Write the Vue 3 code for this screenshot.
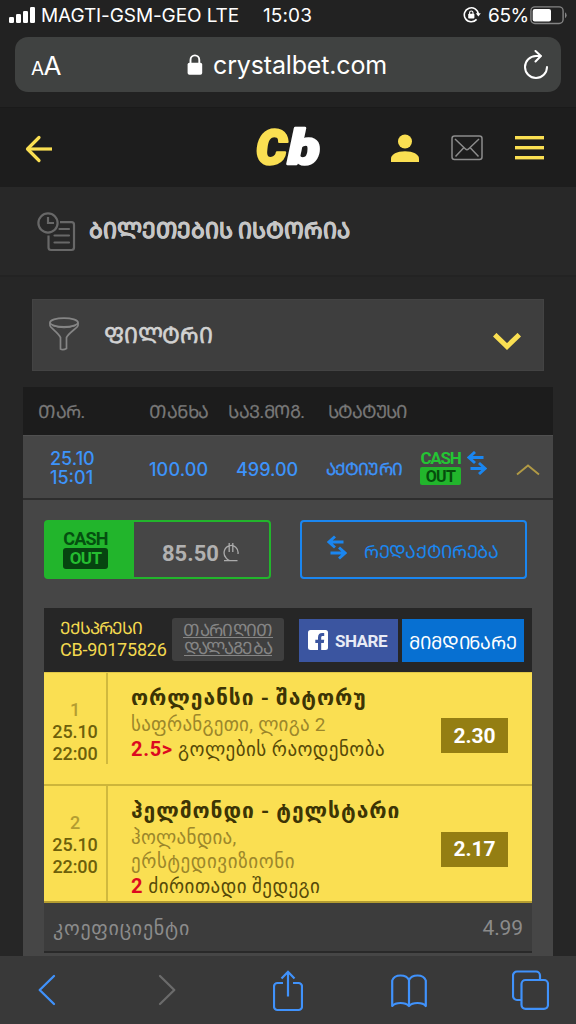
<script setup>
// Mtavruli (capital) forms sit at a fixed offset from the Mkhedruli letters.
const caps = (s) => s.replace(/[\u10d0-\u10f0]/g, (c) => String.fromCodePoint(c.codePointAt(0) + 0xbc0))

const matches = [
  {
    no: 1, date: '25.10', time: '22:00', teams: 'ორლეანსი - შატორუ',
    league: ['საფრანგეთი, ლიგა 2'], pick: '2.5>', market: 'გოლების რაოდენობა', odd: '2.30',
  },
  {
    no: 2, date: '25.10', time: '22:00', teams: 'ჰელმონდი - ტელსტარი',
    league: ['ჰოლანდია,', 'ერსტედივიზიონი'], pick: '2', market: 'ძირითადი შედეგი', odd: '2.17',
  },
]
</script>

<template>
  <div class="phone">
    <div class="status">
      <svg class="signal" width="26" height="16" viewBox="0 0 26 16" fill="#fff">
        <rect x="0" y="10" width="5" height="6" rx="1.3" /><rect x="7" y="7" width="5" height="9" rx="1.3" />
        <rect x="14" y="4" width="5" height="12" rx="1.3" /><rect x="21" y="0" width="5" height="16" rx="1.3" />
      </svg>
      <span class="carrier">MAGTI-GSM-GEO LTE</span>
      <span class="clock">15:03</span>
      <svg class="lock-rot" width="18" height="18" viewBox="0 0 18 18" fill="none">
        <path d="M15.3 8.2A7 7 0 1 0 13.6 13.4" stroke="#fff" stroke-width="1.6" />
        <path d="M12.8 7.2h5l-2.4 3.4z" fill="#fff" />
        <rect x="5.2" y="7.8" width="6.2" height="4.8" rx=".8" fill="#fff" />
        <path d="M6.6 8V6.7a1.7 1.7 0 0 1 3.4 0V8" stroke="#fff" stroke-width="1.1" />
      </svg>
      <span class="percent">65%</span>
      <svg class="battery" width="37" height="19" viewBox="0 0 37 19">
        <rect x=".9" y=".9" width="32.2" height="16.6" rx="4" fill="none" stroke="#858585" stroke-width="1.4" />
        <rect x="2.7" y="3" width="18.3" height="12.4" rx="2" fill="#fff" />
        <path d="M35 6.3q1.6.8 1.6 3t-1.6 3z" fill="#858585" />
      </svg>
    </div>

    <div class="url">
      <span class="aa"><small>A</small>A</span>
      <svg class="padlock" width="16" height="22" viewBox="0 0 16 22">
        <rect x=".6" y="8.8" width="14.6" height="12" rx="1.8" fill="#fff" />
        <path d="M3.5 9.5V6a4.4 4.6 0 0 1 8.8 0v3.5" fill="none" stroke="#fff" stroke-width="1.9" />
      </svg>
      <span class="host">crystalbet.com</span>
      <svg class="reload" width="26" height="30" viewBox="0 0 26 30" fill="none" stroke="#fff" stroke-width="2" stroke-linecap="round" stroke-linejoin="round">
        <path d="M24 17A11 11 0 1 1 13 6h4.5" /><path d="M12.5 1l5.4 5-5.4 5.5" />
      </svg>
    </div>

    <header class="nav">
      <svg class="back" width="28" height="28" viewBox="0 0 28 28" fill="none" stroke="#fadf52" stroke-width="3.2">
        <path d="M27 14H3" /><path d="M14 2.5L2.5 14 14 25.5" stroke-linecap="round" stroke-linejoin="round" />
      </svg>
      <svg class="logo" width="68" height="42" viewBox="0 0 68 42">
        <text x="0" y="37.5" textLength="31" lengthAdjust="spacingAndGlyphs" fill="#fadf52" stroke="#fadf52">C</text>
        <text x="32" y="37.5" textLength="32" lengthAdjust="spacingAndGlyphs" fill="#fff" stroke="#fff">b</text>
      </svg>
      <svg class="user" width="28" height="29" viewBox="0 0 28 29" fill="#fadf52">
        <circle cx="14" cy="7.5" r="7" /><path d="M0 28v-3.500c0-4 6-7.200 14-7.200s14 3.200 14 7.200V28z" />
      </svg>
      <svg class="mail" width="32" height="26" viewBox="0 0 32 26" fill="none" stroke="#8c8c8c" stroke-width="1.5">
        <rect x="1" y="1" width="30" height="23.5" rx="2.5" />
        <path d="M4 4l10.500 10q1.500 1.400 3 0L28 4M4.500 21.500l8-8.500M27.500 21.500l-8-8.500" />
      </svg>
      <svg class="burger" width="29" height="24" viewBox="0 0 29 24" fill="#fadf52">
        <rect width="29" height="3.4" /><rect y="10" width="29" height="3.4" /><rect y="20" width="29" height="3.4" />
      </svg>
    </header>

    <section class="title">
      <svg width="40" height="40" viewBox="0 0 40 40" fill="none" stroke="#686868" stroke-width="2.200">
        <circle cx="11" cy="11" r="9.600" /><path d="M11 5v6h6" />
        <path d="M23 10.200h11.500a2.500 2.500 0 0 1 2.500 2.500v22.800a2.500 2.500 0 0 1-2.500 2.500H14a2.500 2.500 0 0 1-2.500-2.500V23.500" />
        <path d="M22.500 17h9.500M17.500 23.500h14.500M17.500 30.500h14.500" stroke-linecap="round" />
      </svg>
      <h1 class="mt">{{ caps('ბილეთების ისტორია') }}</h1>
    </section>

    <section class="filter">
      <svg width="30" height="34" viewBox="0 0 30 34" fill="none" stroke="#858585" stroke-width="1.700">
        <ellipse cx="15" cy="5.500" rx="14" ry="4.400" />
        <path d="M1 5.500v3c0 2 8 7 10.500 12V32q2.500 1.500 6-.5V20.500C20 15.500 29 10.500 29 8.500v-3" />
        <path d="M3 8.500q12 4.500 24 0" stroke-width="1" />
      </svg>
      <span class="mt">{{ caps('ფილტრი') }}</span>
      <svg class="chev" width="28" height="18" viewBox="0 0 28 18" fill="none" stroke="#fadf52" stroke-width="5"><path d="M1.700 1.700L14 13.500 26.300 1.700" /></svg>
    </section>

    <section class="table">
      <div class="thead">
        <span class="mt h1c">{{ caps('თარ.') }}</span><span class="mt h2c">{{ caps('თანხა') }}</span>
        <span class="mt h3c">{{ caps('სავ.მოგ.') }}</span><span class="mt">{{ caps('სტატუსი') }}</span>
      </div>
      <div class="trow">
        <span class="when">25.10<br>15:01</span><span class="sum">100.00</span><span class="win">499.00</span>
        <span class="mt state">{{ caps('აქტიური') }}</span>
        <span class="co"><b>CASH</b><i>OUT</i></span>
        <svg class="swap" width="20" height="24" viewBox="0 0 20 24" fill="none" stroke="#1a86f0" stroke-width="2.900"><path d="M16.500 6.500H2M8 1L2 6.500 8 12M3.500 17.500H18M12 12l6 5.500-6 5.500" /></svg>
        <svg class="up" width="24" height="12" viewBox="0 0 24 12" fill="none" stroke="#b19a45" stroke-width="1.900"><path d="M1 10.500L12 1.500 23 10.500" /></svg>
      </div>

      <div class="body">
        <div class="actions">
          <div class="cash">
            <div class="tag"><span class="co dark"><b>CASH</b><i>OUT</i></span></div>
            <div class="amount">85.50
              <svg width="16" height="19" viewBox="0 0 16 19" fill="none" stroke="#ababab" stroke-width="1.300"><path d="M15 11a7 7.300 0 1 0-12 3.800q1.300 1.800 3.500 2.800M1 17.600h13.500M6.200 0v9M9.800 0v9" /></svg>
            </div>
          </div>
          <div class="edit">
            <svg class="swap2" width="20" height="25" viewBox="0 0 20 24" fill="none" stroke="#1a86f0" stroke-width="2.900"><path d="M16.500 6.500H2M8 1L2 6.500 8 12M3.500 17.500H18M12 12l6 5.500-6 5.500" /></svg>
            <span class="mt">{{ caps('რედაქტირება') }}</span>
          </div>
        </div>

        <div class="ticket">
          <div class="thd">
            <div class="code"><span class="mt">{{ caps('ექსპრესი') }}</span><span>CB-90175826</span></div>
            <div class="sort"><span class="mt">{{ caps('თარიღით') }}</span><span class="mt">{{ caps('დალაგება') }}</span></div>
            <div class="share">
              <svg width="20" height="20" viewBox="0 0 20 20"><rect width="20" height="20" rx="2.500" fill="#fff" /><path d="M10 20v-7H7.300V9.800H10V7.500c0-3 1.600-4.400 4.200-4.400h2v3h-1.500c-1.100 0-1.500.5-1.500 1.500v2.200h3l-.4 3.200h-2.600v7z" fill="#3b55a0" /></svg>
              <b>SHARE</b>
            </div>
            <div class="current"><span class="mt">{{ caps('მიმდინარე') }}</span></div>
          </div>

          <div v-for="m in matches" :key="m.no" class="match" :class="'m' + m.no">
            <div class="mtime"><em>{{ m.no }}</em><span>{{ m.date }}</span><span>{{ m.time }}</span></div>
            <div class="info">
              <div class="teams">{{ m.teams }}</div>
              <div v-for="l in m.league" :key="l" class="league">{{ l }}</div>
              <div class="bet"><b>{{ m.pick }}</b> <span>{{ m.market }}</span></div>
            </div>
            <div class="odd">{{ m.odd }}</div>
          </div>

          <div class="total"><span>კოეფიციენტი</span><span class="val">4.99</span></div>
        </div>
      </div>
    </section>

    <nav class="toolbar">
      <svg class="t1" width="18" height="32" viewBox="0 0 18 32" fill="none" stroke="#4092fb" stroke-width="2.300" stroke-linecap="round" stroke-linejoin="round"><path d="M16 2L1.700 16 16 30" /></svg>
      <svg class="t2" width="18" height="32" viewBox="0 0 18 32" fill="none" stroke="#6b6b6b" stroke-width="2.300" stroke-linecap="round" stroke-linejoin="round"><path d="M2 2l14.300 14L2 30" /></svg>
      <svg class="t3" width="30" height="42" viewBox="0 0 30 42" fill="none" stroke="#4092fb" stroke-width="2.200"><path d="M10 13H4.500A3.500 3.500 0 0 0 1 16.500v20A3.500 3.500 0 0 0 4.500 40h21a3.500 3.500 0 0 0 3.500-3.500v-20A3.500 3.500 0 0 0 25.500 13H20M15 26.500V2M8.500 8.500L15 1.800l6.500 6.700" /></svg>
      <svg class="t4" width="36" height="34" viewBox="0 0 36 34" fill="none" stroke="#4092fb" stroke-width="2.200" stroke-linejoin="round"><path d="M18 6v25.500M18 6q-2-4.500-8.500-4.500T1.200 6.500v25.500q2.500-3 8.300-3t8.500 3q2.500-3 8.500-3t8.300 3V6.500q-1.800-5-8.300-5T18 6z" /></svg>
      <svg class="t5" width="37" height="40" viewBox="0 0 37 40" fill="none" stroke="#4092fb" stroke-width="2.200"><path d="M9 30H5a4 4 0 0 1-4-4V5.500a4 4 0 0 1 4-4h19a4 4 0 0 1 4 4V10" /><rect x="9.500" y="10" width="26.500" height="28.800" rx="4" /></svg>
    </nav>
  </div>
</template>

<style>
body { background: #262626; }
</style>

<style scoped>
.phone { width: 576px; height: 1024px; overflow: hidden; background: #262626; display: flex; flex-direction: column; font-family: Roboto, "DejaVu Sans", sans-serif; line-height: 1; }
.phone * { box-sizing: border-box; }
.phone svg { flex: none; display: block; }
.mt { font-family: Roboto, "Noto Sans", sans-serif; white-space: nowrap; }
.status { height: 37px; flex: none; display: flex; background: #222; color: #fff; font-family: Inter, sans-serif; font-size: 19px; padding-left: 9px; }
.signal { margin-top: 7px; }
.carrier { margin: 6px 0 0 6px; width: 222px; letter-spacing: -.1px; white-space: nowrap; }
.clock { margin-top: 6px; width: 200px; letter-spacing: .1px; }
.lock-rot { margin-top: 6px; }
.percent { margin: 6px 0 0 7px; width: 42px; letter-spacing: -.4px; }
.battery { margin-top: 6px; }
.url { height: 55px; margin: 0 15px; flex: none; border-radius: 13px; background: #404241; box-shadow: 0 0 0 50px #222; clip-path: inset(0 -15px -16px -15px); display: flex; color: #fff; font-family: Inter, sans-serif; }
.aa { margin: 16px 0 0 16px; width: 156px; font-size: 26px; letter-spacing: -.7px; }
.aa small { font-size: 19px; }
.padlock { margin-top: 17px; }
.host { margin: 16px 0 0 10px; width: 310px; font-size: 25px; letter-spacing: -.15px; }
.reload { margin-top: 13px; }
.nav { height: 80px; margin-top: 15px; flex: none; background: #1d1d1d; display: flex; z-index: 1; border-top: 1px solid #1a1a1a; }
.back { margin: 27px 0 0 25px; }
.logo { margin: 18px 0 0 203px; overflow: visible; }
.logo text { font: italic 900 48px Roboto, sans-serif; stroke-width: 2.4px; stroke-linejoin: round; }
.user { margin: 26px 0 0 67px; }
.mail { margin: 27px 0 0 32px; }
.burger { margin: 28px 0 0 32px; }
.title { height: 112px; flex: none; display: flex; background: linear-gradient(#282828 88px, #232323 88px, #232323 90px, #262626 90px); }
.title svg { margin: 25px 0 0 37px; }
h1 { margin: 32px 0 0 12px; font-size: 22px; line-height: 24px; font-weight: 700; color: #c6c6c6; -webkit-text-stroke: .3px #c6c6c6; }
.filter { height: 72px; flex: none; margin: 0 32px; background: #3e3e3e; border: 1px solid #434343; display: flex; color: #d2d2d2; }
.filter svg { margin: 17px 0 0 16px; }
.filter .mt { margin: 24px 0 0 25px; width: 370px; font-size: 22px; line-height: 24px; letter-spacing: -.2px; -webkit-text-stroke: .6px #d2d2d2; }
.filter .chev { margin: 33px 0 0 19px; }
.table { margin: 16px 23px 0; height: 569px; flex: none; background: #464646; }
.thead { height: 48px; background: #1c1c1c; display: flex; color: #777; font-size: 18px; line-height: 22px; padding: 14px 0 0 15px; letter-spacing: -.5px; }
.thead .mt { -webkit-text-stroke: .2px #777; }
.h1c { width: 111px; } .h2c { width: 79px; } .h3c { width: 100px; }
.thead .mt:last-child { letter-spacing: -1px; }
.trow { height: 65px; display: flex; background: #464646; border-top: 1px solid #505050; border-bottom: 2px solid #2d2d2d; color: #3d93fa; font-family: Inter, sans-serif; font-size: 18px; font-weight: 500; }
.when { margin: 13px 0 0 27px; width: 99px; line-height: 19px; }
.sum { margin: 25px 0 0; width: 87px; letter-spacing: .15px; } .win { margin: 25px 0 0; width: 90px; }
.state { margin: 22px 0 0; width: 94px; font-size: 17px; line-height: 22px; letter-spacing: -.9px; -webkit-text-stroke: .3px #3d93fa; }
.co { display: flex; flex-direction: column; width: 41px; margin-top: 14px; font-family: Roboto, sans-serif; font-size: 17px; color: #24c434; text-align: center; letter-spacing: -1.2px; }
.co b { line-height: 17px; font-weight: 700; }
.co i { font-style: normal; font-weight: 700; background: #22b52c; color: #064d0c; border-radius: 2px; height: 18px; line-height: 19px; font-size: 16px; letter-spacing: -.6px; }
.swap { margin: 15px 0 0 6px; }
.up { margin: 28px 0 0 29px; }
.body { padding: 20px 21px 0; }
.actions { display: flex; gap: 29px; height: 59px; }
.cash { width: 227px; border: 2px solid #22b52c; border-radius: 4px; display: flex; }
.tag { width: 88px; background: #22b52c; padding: 8px 0 0 17px; }
.co.dark { width: 45px; margin: 0; color: #045010; font-size: 18px; letter-spacing: -.8px; }
.co.dark b { line-height: 18px; }
.co.dark i { background: #064410; color: #25bd30; height: 21px; line-height: 21px; font-size: 17px; border-radius: 3px; }
.amount { flex: 1; display: flex; padding: 20px 0 0 28px; color: #b1b1b1; font: 700 22px/24px Roboto, sans-serif; }
.amount svg { margin: 1px 0 0 4px; }
.edit { width: 227px; border: 2px solid #1a86f0; border-radius: 4px; display: flex; color: #1a86f0; }
.swap2 { margin: 13px 0 0 25px; }
.edit .mt { margin: 18px 0 0 17px; font-size: 18px; line-height: 24px; letter-spacing: -.3px; }
.ticket { margin-top: 29px; background: #3c3c3c; height: 345px; border-bottom: 2px solid #292929; }
.thd { height: 64px; background: #262626; display: flex; }
.code { width: 128px; padding: 10px 0 0 16px; display: flex; flex-direction: column; color: #f3d94f; font-size: 18px; line-height: 21px; white-space: nowrap; letter-spacing: -.2px; }
.code .mt { font-size: 17px; letter-spacing: -1px; }
.sort { width: 112px; height: 43px; margin-top: 10px; background: #3f3f3f; border-radius: 3px; display: flex; flex-direction: column; align-items: center; color: #858585; font-size: 17px; line-height: 18px; padding-top: 3px; letter-spacing: -.7px; }
.sort .mt { border-bottom: 1px solid #858585; height: 17px; margin-bottom: 1px; }
.share { width: 99px; height: 43px; margin: 11px 0 0 15px; background: #3b55a0; display: flex; color: #e8ebf5; }
.share svg { margin: 11px 0 0 9px; }
.share b { margin: 14px 0 0 7px; font-size: 17px; letter-spacing: -.5px; }
.current { width: 122px; height: 43px; margin: 11px 0 0 4px; background: #0770d2; color: #fff; display: flex; justify-content: center; }
.current .mt { margin-top: 12px; font-size: 18px; line-height: 24px; letter-spacing: -.2px; }
.match { display: flex; background: #fadf52; border-top: 2px solid #cdb53a; color: #6d5f0b; }
.m1 { height: 112px; border-top: 1px solid #e0c748; }
.m2 { height: 119px; border-bottom: 2px solid #b49d31; }
.mtime { width: 64px; height: 91px; border-right: 2px solid #d0b93e; display: flex; flex-direction: column; align-items: center; font-size: 18px; line-height: 22px; font-weight: 500; padding-top: 26px; letter-spacing: -.1px; }
.m2 .mtime { height: 115px; }
.mtime em { font-style: normal; color: #b49d31; }
.info { width: 310px; padding: 12px 0 0 23px; white-space: nowrap; }
.teams { color: #3c3405; font-size: 21px; font-weight: 700; line-height: 27px; height: 28px; letter-spacing: .95px; }
.league { color: #9c872b; font-size: 19px; line-height: 24px; height: 24px; letter-spacing: .4px; }
.league:nth-child(2) { letter-spacing: .25px; }
.league:nth-child(3) { letter-spacing: .6px; }
.bet { margin-top: -1px; color: #564a08; font-size: 19px; line-height: 26px; height: 26px; letter-spacing: .45px; }
.bet b { color: #dc0a20; font-size: 20px; letter-spacing: .7px; }
.odd { margin: 45px 0 0 23px; width: 67px; height: 35px; background: #947e12; color: #fff; font-size: 21px; font-weight: 700; line-height: 36px; text-align: center; }
.m2 .odd { margin-top: 46px; line-height: 35px; }
.total { display: flex; justify-content: space-between; padding: 13px 9px 0; color: #8b8b8b; font-size: 20px; line-height: 24px; letter-spacing: .75px; }
.val { font-size: 21px; letter-spacing: -.1px; }
.toolbar { height: 68px; flex: none; background: #393939; display: flex; }
.t1 { margin: 18px 0 0 38px; } .t2 { margin: 18px 0 0 102px; } .t3 { margin: 14px 0 0 97px; } .t4 { margin: 18px 0 0 88px; } .t5 { margin: 14px 0 0 85px; }
</style>
